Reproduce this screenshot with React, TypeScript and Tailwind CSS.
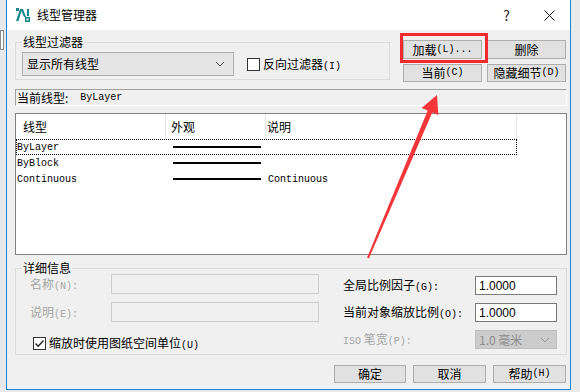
import React from 'react'

const cjk = "font-['Microsoft_YaHei','Noto_Sans_CJK_SC',sans-serif]"
const mono = "font-['Liberation_Mono','Noto_Sans_CJK_SC',monospace]"

function Btn({ children, className = '' }: { children: React.ReactNode; className?: string }) {
  return (
    <div
      className={`flex items-center justify-center bg-[#e1e1e1] border border-[#adadad] text-[12px] leading-none text-black ${className}`}
    >
      {children}
    </div>
  )
}

function Chevron({ color = '#444' }: { color?: string }) {
  return (
    <svg width="10" height="6" viewBox="0 0 10 6">
      <path d="M1 1 L5 5 L9 1" fill="none" stroke={color} strokeWidth="1" />
    </svg>
  )
}

function Group({
  label,
  className = '',
  children,
}: {
  label: string
  className?: string
  children: React.ReactNode
}) {
  return (
    <div className={`relative pt-[8px] ${className}`}>
      <span className="absolute left-[7px] top-0 bg-[#f0f0f0] px-[1px] text-[12px] leading-[16px]">
        {label}
      </span>
      <div className="h-full border border-[#dcdcdc]">{children}</div>
    </div>
  )
}

const rows = [
  { name: 'ByLayer', desc: '' },
  { name: 'ByBlock', desc: '' },
  { name: 'Continuous', desc: 'Continuous' },
]

export default function App() {
  return (
    <div className={`relative w-[580px] h-[392px] overflow-hidden bg-[#e9e9e9] ${cjk}`}>
      {/* window behind */}
      <div className="absolute left-0 top-[30px] h-[20px] w-[4px] border border-[#8a8a8a] bg-white" />

      <div className="ml-[6px] w-[565px] h-[390px] flex flex-col border-x border-b border-[#1883d7] bg-[#f0f0f0]">
        {/* Title bar */}
        <div className="h-[30px] shrink-0 bg-white flex items-center">
          <svg className="ml-[9px]" width="14" height="14" viewBox="0 0 14 14">
            <rect x="0" y="0" width="14" height="14" fill="#ffffff" />
            <path d="M0 13 L4 1 L7 1 L10 9 L8 9 L5.5 3 L2.5 13 Z" fill="#15868b" />
            <rect x="0" y="0" width="3" height="3" fill="#15868b" />
            <rect x="9" y="9" width="5" height="5" fill="#15868b" />
            <rect x="10.5" y="10.5" width="2" height="2" fill="#ffffff" />
            <rect x="11" y="1" width="2" height="7" fill="#15868b" />
          </svg>
          <span className="ml-[7px] text-[12px] text-black">线型管理器</span>
          <span className="ml-auto mr-[34px] text-[14px] text-[#222]">?</span>
          <svg className="mr-[15px]" width="11" height="11" viewBox="0 0 11 11">
            <path d="M0.5 0.5 L10.5 10.5 M10.5 0.5 L0.5 10.5" stroke="#111" strokeWidth="1" />
          </svg>
        </div>

        {/* Filter + buttons */}
        <div className="flex mt-[4px] h-[48px]">
          <Group label="线型过滤器" className="ml-[8px] w-[375px] h-[46px]">
            <div className="flex items-center pl-[6px] pt-[9px]">
              <div className="w-[212px] h-[24px] bg-[#e5e5e5] border border-[#adadad] flex items-center pl-[4px] pr-[8px] text-[12px]">
                <span>显示所有线型</span>
                <span className="ml-auto">
                  <Chevron />
                </span>
              </div>
              <div className="ml-[13px] w-[13px] h-[13px] bg-white border border-[#333]" />
              <span className="ml-[3px] text-[12px]">
                反向过滤器<span className={`${mono} text-[10px]`}>(I)</span>
              </span>
            </div>
          </Group>
          <div className="ml-[13px] mt-[6px] grid grid-cols-[79px_79px] gap-x-[5px] gap-y-[5px] h-fit">
            <Btn className="h-[19px] border-[#0078d7]">
              加载<span className={`${mono} text-[10px]`}>(L)...</span>
            </Btn>
            <Btn className="h-[19px]">删除</Btn>
            <Btn className="h-[18px]">
              当前<span className={`${mono} text-[10px]`}>(C)</span>
            </Btn>
            <Btn className="h-[18px]">
              隐藏细节<span className={`${mono} text-[10px]`}>(D)</span>
            </Btn>
          </div>
        </div>

        {/* Current linetype */}
        <div className="ml-[8px] mt-[7px] w-[552px] h-[17px] border-t border-l border-[#a0a0a0] border-b border-r border-b-white border-r-white flex items-center pl-[1px] text-[12px]">
          <span>当前线型:</span>
          <span className={`${mono} text-[10px] ml-[12px]`}>ByLayer</span>
        </div>

        {/* Linetype list */}
        <div className="ml-[8px] mt-[7px] w-[552px] h-[142px] border border-[#828282] bg-white">
          <div className="flex h-[25px] text-[12px]">
            <div className="w-[150px] border-r border-[#e5e5e5] pl-[7px] flex items-center">线型</div>
            <div className="w-[100px] border-r border-[#e5e5e5] pl-[5px] flex items-center">外观</div>
            <div className="w-[251px] border-r border-[#e5e5e5] pl-[1px] flex items-center">说明</div>
          </div>
          {rows.map((r, i) => (
            <div
              key={r.name}
              className={`flex h-[16px] w-[501px] items-center ${mono} text-[10px] ${
                i === 0 ? 'border border-dotted border-black' : 'border border-transparent'
              }`}
            >
              <div className="w-[150px] pl-[0px]">{r.name}</div>
              <div className="w-[100px] pl-[6px]">
                <div className="w-[88px] h-[1.5px] bg-black" />
              </div>
              <div className="pl-[1px]">{r.desc}</div>
            </div>
          ))}
        </div>

        {/* Details */}
        <Group label="详细信息" className="ml-[8px] mt-[5px] w-[552px] h-[95px]">
          <div className="flex pl-[14px] text-[12px]">
            <div className="flex flex-col pt-[5px] gap-[8px]">
              <div className="flex items-center h-[20px]">
                <span className="w-[81px] text-[#a6a6a6]">
                  名称<span className={`${mono} text-[10px]`}>(N):</span>
                </span>
                <div className="w-[208px] h-[20px] border border-[#cccccc] bg-[#f0f0f0]" />
              </div>
              <div className="flex items-center h-[20px]">
                <span className="w-[81px] text-[#a6a6a6]">
                  说明<span className={`${mono} text-[10px]`}>(E):</span>
                </span>
                <div className="w-[208px] h-[20px] border border-[#cccccc] bg-[#f0f0f0]" />
              </div>
              <div className="flex items-center h-[18px] mt-[4px] ml-[3px]">
                <div className="w-[13px] h-[13px] bg-white border border-[#333] flex items-center justify-center">
                  <svg width="11" height="11" viewBox="0 0 11 11">
                    <path d="M1.5 5.5 L4.2 8.3 L9.5 2.5" fill="none" stroke="#222" strokeWidth="1.3" />
                  </svg>
                </div>
                <span className="ml-[3px]">
                  缩放时使用图纸空间单位<span className={`${mono} text-[10px]`}>(U)</span>
                </span>
              </div>
            </div>
            <div className="flex flex-col ml-[24px] pt-[7px] gap-[8px]">
              <div className="flex items-center h-[19px]">
                <span className="w-[132px]">
                  全局比例因子<span className={`${mono} text-[10px]`}>(G):</span>
                </span>
                <div className="w-[82px] h-[19px] border border-[#7a7a7a] bg-white pl-[3px] flex items-center text-[12px] font-['Liberation_Sans',sans-serif]">
                  1.0000
                </div>
              </div>
              <div className="flex items-center h-[19px]">
                <span className="w-[132px]">
                  当前对象缩放比例<span className={`${mono} text-[10px]`}>(O):</span>
                </span>
                <div className="w-[82px] h-[19px] border border-[#7a7a7a] bg-white pl-[3px] flex items-center text-[12px] font-['Liberation_Sans',sans-serif]">
                  1.0000
                </div>
              </div>
              <div className="flex items-center h-[19px]">
                <span className="w-[132px] text-[#a6a6a6]">
                  <span className={`${mono} text-[10px]`}>ISO</span> 笔宽
                  <span className={`${mono} text-[10px]`}>(P):</span>
                </span>
                <div className="w-[82px] h-[19px] border border-[#bfbfbf] bg-[#cccccc] pl-[3px] pr-[6px] flex items-center text-[12px] text-[#8c8c8c]">
                  <span>1.0 毫米</span>
                  <span className="ml-auto">
                    <Chevron color="#9a9a9a" />
                  </span>
                </div>
              </div>
            </div>
          </div>
        </Group>

        {/* Bottom buttons */}
        <div className="flex mt-[10px] ml-[327px] gap-[7px]">
          <Btn className="w-[72px] h-[18px]">确定</Btn>
          <Btn className="w-[73px] h-[18px]">取消</Btn>
          <Btn className="w-[73px] h-[18px]">
            帮助<span className={`${mono} text-[10px]`}>(H)</span>
          </Btn>
        </div>
      </div>

      {/* Annotation overlay */}
      <div className="absolute left-[400px] top-[33px] w-[88px] h-[30px] border-[3px] border-[#f2282d]" />
      <svg className="absolute left-0 top-0 pointer-events-none" width="580" height="392">
        <polygon
          points="437,95 438.3,115.1 432.3,112.6 368.9,258.4 367.1,257.6 427.7,110.6 421.7,108.1"
          fill="#f4363a"
        />
      </svg>
    </div>
  )
}
